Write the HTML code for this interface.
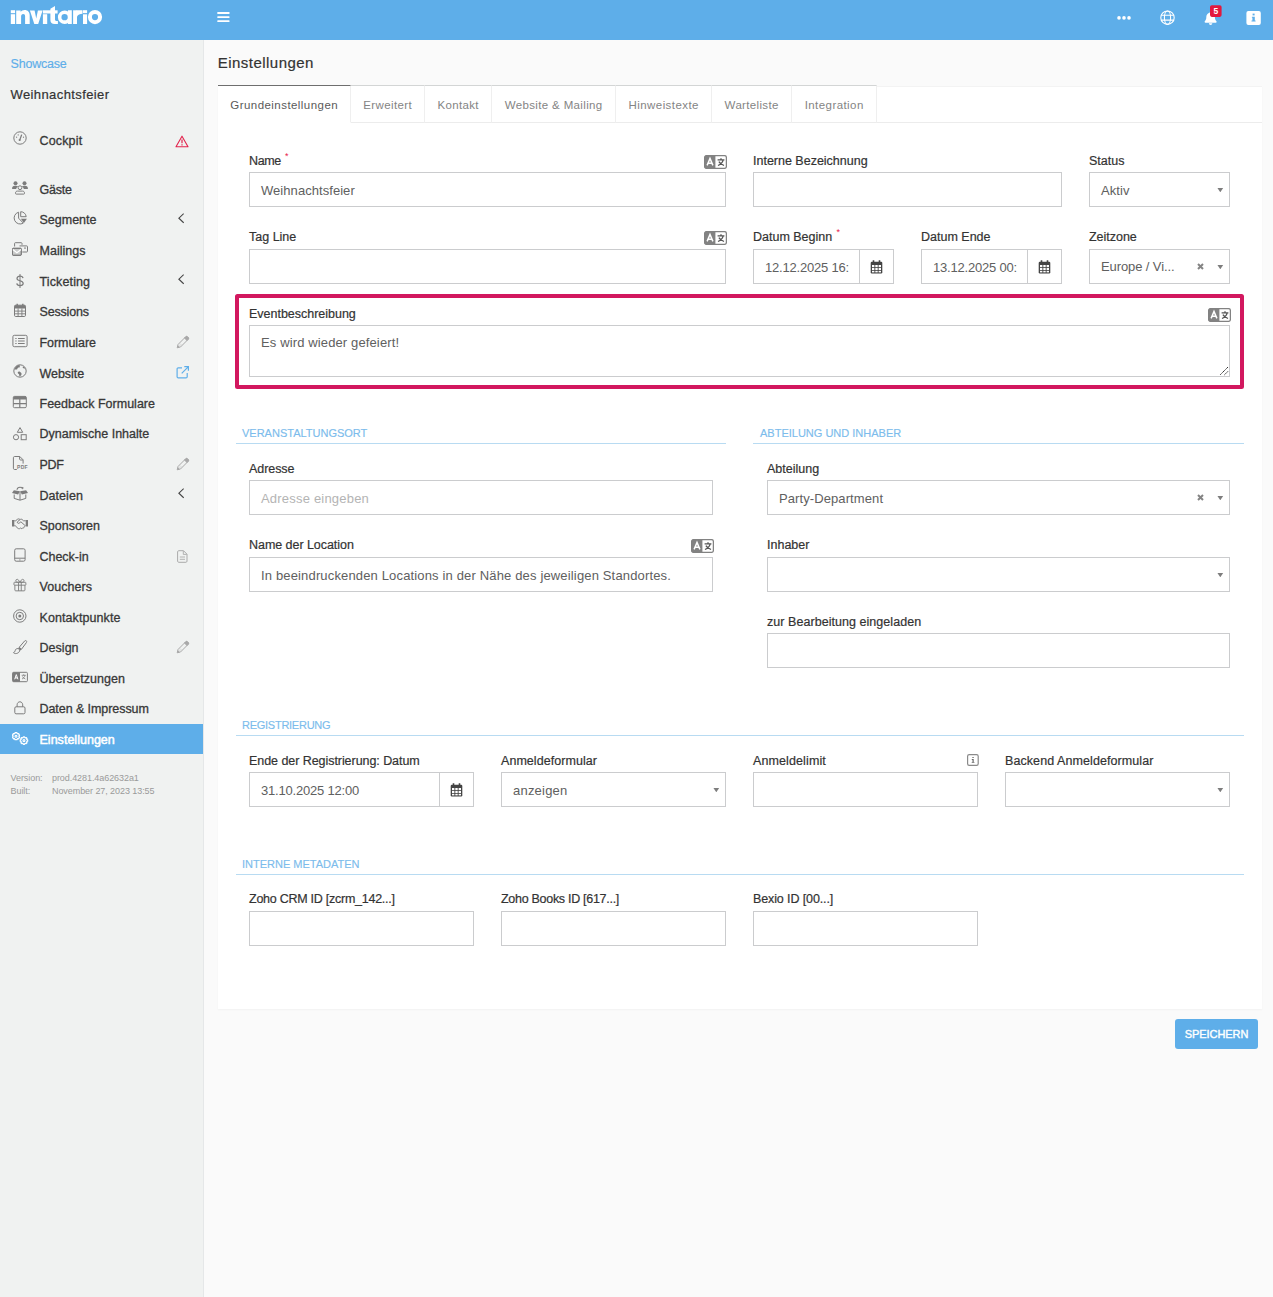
<!DOCTYPE html>
<html lang="de">
<head>
<meta charset="utf-8">
<title>Einstellungen</title>
<style>
*{box-sizing:border-box;margin:0;padding:0}
html,body{width:1273px;height:1297px;overflow:hidden}
body{position:relative;background:#fafafa;font-family:"Liberation Sans",sans-serif;font-size:13px;color:#333}
.a{position:absolute;white-space:nowrap}
#hdr{left:0;top:0;width:1273px;height:40px;background:#5eaee9}
#side{left:0;top:40px;width:203px;height:1257px;background:#f0f2f1}
#sideb{left:203px;top:40px;width:1px;height:1257px;background:#e5e7e8}
/* sidebar */
.mi{left:0;width:203px;height:30.56px}
.mi .t{position:absolute;left:39.500px;top:1px;line-height:30.560px;font-size:12.500px;color:#383838;-webkit-text-stroke:.3px #383838}
.mi svg.i{position:absolute;left:12px;top:6px}
.mi svg.r{position:absolute;right:14px;top:8px}
.mi.on{background:#5eaee9}
.mi.on .t{color:#fff;-webkit-text-stroke:.5px #fff}
/* main */
#panel{left:218px;top:86px;width:1044px;height:923px;background:#fff;border-top:1px solid #f3f3f3;box-shadow:0 1px 2px rgba(0,0,0,.035)}
.tab{top:85px;height:38px;line-height:38px;text-align:center;font-size:11.500px;color:#848484;border-top:1px solid #d3d5d5;border-right:1px solid #efefef;border-bottom:1px solid #ececec;background:#fff}
.tab.on{color:#5a5a5a;border-top:1px solid #6e6e6e;border-bottom:1px solid #fff;border-right:1px solid #efefef}
.lb{font-size:12.500px;line-height:16px;color:#333;-webkit-text-stroke:.2px #333}
.lb i{font-style:normal;color:#e8174b;font-size:9px;position:relative;top:-6px;left:4.300px;-webkit-text-stroke:0}
.in{height:35px;border:1px solid #cbccce;background:#fff;line-height:35.200px;padding-left:11px;font-size:13px;color:#606060;letter-spacing:.17px;overflow:hidden}
.ph{color:#b4b4b4}
.dt{letter-spacing:-.2px}
.dt::after{content:"";position:absolute;right:0;top:0;width:10px;height:33px;background:#fff}
.sec{font-size:11px;line-height:14px;color:#7cbcec;letter-spacing:0;-webkit-text-stroke:.15px #7cbcec}
.ln{height:1px;background:#b8dbf2}
.car{position:absolute;right:5.500px;top:15px;width:6.400px;height:4.400px;background:#7d7d7d;clip-path:polygon(5% 0,95% 0,50% 96%)}
.x{position:absolute;right:25.100px;top:12.600px}
.cal{height:35px;width:34px;border:1px solid #cbccce;border-left:0;background:#fff}
.cal svg{position:absolute;left:10.400px;top:9.800px}
</style>
</head>
<body>
<div class="a" id="hdr"></div>
<div class="a" id="side"></div>
<div class="a" id="sideb"></div>
<div class="a" id="panel"></div>
<!--HDR-->
<svg class="a" style="left:0;top:0" width="1273" height="40" viewBox="0 0 1273 40">
<g fill="#fff">
<!-- logo -->
<rect x="10.800" y="10.200" width="4.300" height="3"/><rect x="10.800" y="14.200" width="4.300" height="9.800"/>
<path d="M16.200 24V10.400h4.500v1.500c.9-1.100 2.200-1.800 3.900-1.800 3.200 0 5.100 2.100 5.100 5.400V24h-4.600v-7.700c0-1.500-.7-2.300-1.900-2.300-1.300 0-2.100.9-2.100 2.400V24z"/>
<path d="M29.900 10.400h4.700l1.650 8 1.650-8h4.700L38.200 24h-3.900z"/>
<rect x="42.900" y="10.300" width="14.700" height="3.200"/><rect x="42.900" y="14.200" width="4.300" height="9.800"/>
<path d="M50.400 8.700L55 6.100v13.500c0 .9.500 1.300 1.300 1.300h1.600V24h-3.200c-2.900 0-4.300-1.400-4.300-4.100z"/>
<path d="M64.600 10.500a6.700 6.700 0 1 0 0 13.400c1.300 0 2.400-.4 3.300-1V24h3.900V10.300h-3.900v1.200c-.9-.6-2-1-3.300-1zm0 3.500a3.150 3.150 0 1 1 0 6.300a3.150 3.150 0 1 1 0-6.300z"/>
<rect x="73.100" y="10.300" width="3.900" height="13.700"/><path d="M76.500 10.200h6v3.600c-2.600 0-4.500.8-5.500 2.900z"/>
<rect x="83" y="10.200" width="4.100" height="2.900"/><rect x="83" y="14.300" width="4.100" height="9.700"/>
<path d="M95 10a7.100 7.100 0 1 0 0 14.200a7.100 7.100 0 1 0 0-14.200zm0 4a3.100 3.100 0 1 1 0 6.200a3.100 3.100 0 1 1 0-6.200z"/>
<!-- hamburger -->
<rect x="217.300" y="12.100" width="12.200" height="1.800" rx=".5"/><rect x="217.300" y="16.200" width="12.200" height="1.800" rx=".5"/><rect x="217.300" y="20.200" width="12.200" height="1.800" rx=".5"/>
<!-- dots -->
<circle cx="1119" cy="17.900" r="1.800"/><circle cx="1124" cy="17.900" r="1.800"/><circle cx="1129" cy="17.900" r="1.800"/>
<!-- bell -->
<path d="M1210.600 11.400c-.5 0-.9.400-.9.900v.5c-2 .4-3.400 2.200-3.400 4.300v.5c0 1.300-.4 2.500-1.300 3.500l-.2.200c-.2.300-.3.600-.1.900.1.300.4.500.8.500h10.300c.3 0 .7-.2.800-.5.100-.3.100-.7-.2-.9l-.2-.2c-.8-1-1.300-2.200-1.300-3.500v-.5c0-2.100-1.500-3.900-3.400-4.300v-.5c0-.5-.4-.9-.9-.9zm1.200 13c.3-.3.500-.8.500-1.200h-3.400c0 .4.200.9.500 1.200.3.300.8.500 1.200.5s.9-.2 1.200-.5z"/>
<!-- info -->
<rect x="1246.400" y="10.900" width="14.400" height="14" rx="2"/>
</g>
<!-- globe -->
<g fill="none" stroke="#fff" stroke-width="1.100">
<circle cx="1167.500" cy="17.700" r="6.700"/>
<ellipse cx="1167.500" cy="17.700" rx="3.100" ry="6.700"/>
<path d="M1161.300 15.300h12.400M1161.300 20.100h12.400"/>
</g>
<!-- badge -->
<rect x="1210" y="5.200" width="11.600" height="11.700" rx="1.800" fill="#e2183d"/>
<text x="1215.900" y="14" font-family="Liberation Sans" font-size="8.500" font-weight="bold" fill="#fff" text-anchor="middle">5</text>
<!-- info i -->
<g fill="#5eaee9"><rect x="1252.600" y="13.600" width="2" height="1.800"/><path d="M1251.900 16.800h2.900v3.800h.8v1h-4.100v-1h.9v-2.800h-.5z"/></g>
</svg>
<!--/HDR-->
<!--SIDE-->
<div class="a" style="left:10.500px;top:56px;line-height:16px;font-size:12.500px;color:#5eaee9;letter-spacing:-.2px;-webkit-text-stroke:.15px #5eaee9">Showcase</div>
<div class="a" style="left:10.500px;top:85.700px;line-height:18px;font-size:13px;color:#333;letter-spacing:.4px;-webkit-text-stroke:.2px #333">Weihnachtsfeier</div>
<div class="a mi" style="top:124.90px"><svg class="i" style="top:5.200px" width="16" height="16" viewBox="0 0 16 16" fill="none" stroke="#7c7c7c" stroke-width="1" ><circle cx="8" cy="8" r="6.2"/><path d="M9.700 4.600L7.900 9.600" stroke-width="1.300"/><circle cx="7.700" cy="10" r="1.100" fill="#7c7c7c" stroke="none"/><circle cx="4.600" cy="7.200" r=".6" fill="#7c7c7c" stroke="none"/><circle cx="6.200" cy="4.900" r=".6" fill="#7c7c7c" stroke="none"/><circle cx="11.500" cy="7.200" r=".6" fill="#7c7c7c" stroke="none"/></svg><span class="t" style="letter-spacing:0.159px">Cockpit</span><svg class="r" style="right:14.200px;top:9.700px" width="14" height="13" viewBox="0 0 14 13" fill="none" stroke="#e2234c" stroke-width="1.100"><path d="M7 1.200l6 10.500H1z" stroke-linejoin="round"/><path d="M7 4.500v3.700M7 9.300v1.200" stroke-width="1.200"/></svg></div>
<div class="a mi" style="top:173.80px"><svg class="i" width="16" height="16" viewBox="0 0 16 16" fill="none" stroke="#7c7c7c" stroke-width="1" ><circle cx="3.500" cy="3.300" r="2" fill="#7c7c7c" stroke="none"/><circle cx="12.500" cy="3.300" r="2" fill="#7c7c7c" stroke="none"/><path d="M0 8.600c0-1.700 1.200-2.900 2.700-2.900h1.400c.8 0 1.500.3 2 .9-1 .5-1.700 1.300-1.900 2.400H.5c-.3 0-.5-.2-.5-.400z" fill="#7c7c7c" stroke="none"/><path d="M16 8.600c0-1.700-1.200-2.900-2.700-2.900h-1.400c-.8 0-1.500.3-2 .9 1 .5 1.700 1.300 1.900 2.400h3.700c.3 0 .5-.2.500-.400z" fill="#7c7c7c" stroke="none"/><circle cx="8" cy="7.700" r="1.900"/><path d="M5.400 11.100h5.200c1.100 0 1.900.800 1.900 1.900v.4c0 .4-.3.700-.7.700H4.200c-.4 0-.7-.3-.7-.7v-.4c0-1.100.8-1.900 1.900-1.900z"/></svg><span class="t" style="letter-spacing:-0.212px">Gäste</span></div>
<div class="a mi" style="top:204.36px"><svg class="i" width="16" height="16" viewBox="0 0 16 16" fill="none" stroke="#7c7c7c" stroke-width="1" ><path d="M6.600 2.200A6 6 0 1 0 11.300 13.100L6.600 8.200z"/><path d="M8.700 1.700v5h5.500a5.500 5.500 0 0 0-5.500-5z"/><path d="M8.900 8.700h6l-3 4.300z" fill="#7c7c7c" stroke="none"/></svg><span class="t" style="letter-spacing:0.002px">Segmente</span><svg class="r" style="right:18.700px;top:8.700px" width="6.500" height="10.500" viewBox="0 0 6.500 10.500" fill="none" stroke="#444" stroke-width="1.150"><path d="M5.700 .6L.9 5.200l4.800 4.600"/></svg></div>
<div class="a mi" style="top:234.92px"><svg class="i" width="16" height="16" viewBox="0 0 16 16" fill="none" stroke="#7c7c7c" stroke-width="1" ><path d="M2.600 5.500V2.400c0-.4.300-.7.700-.7h6c.4 0 .7.300.7.700v1.400"/><path d="M7.500 4.900h7.300c.4 0 .7.300.7.700v4.700c0 .4-.3.700-.7.700h-4.500"/><rect x="12.300" y="6.400" width="1.400" height="1.400" fill="#7c7c7c" stroke="none"/><rect x=".5" y="7.300" width="8.800" height="7" rx=".8" fill="#c9cbca"/><rect x=".5" y="7.300" width="8.800" height="7" rx=".8"/><path d="M.8 8.500l4.100 3.200 4.100-3.200" stroke="#fff" stroke-width="1.200"/></svg><span class="t" style="letter-spacing:0.018px">Mailings</span></div>
<div class="a mi" style="top:265.48px"><svg class="i" style="top:7.500px" width="16" height="16" viewBox="0 0 16 16" fill="none" stroke="#7c7c7c" stroke-width="1" ><path d="M8 1v14" stroke-width="1"/><path d="M11 5.200c-.2-1.300-1.400-2-3-2-1.700 0-3 .8-3 2.200 0 3 6.200 1.600 6.200 4.900 0 1.500-1.400 2.300-3.200 2.300-1.800 0-3-.8-3.200-2.200" stroke-width="1.200"/></svg><span class="t" style="letter-spacing:0.126px;top:2px">Ticketing</span><svg class="r" style="right:18.700px;top:8.700px" width="6.500" height="10.500" viewBox="0 0 6.500 10.500" fill="none" stroke="#444" stroke-width="1.150"><path d="M5.700 .6L.9 5.200l4.800 4.600"/></svg></div>
<div class="a mi" style="top:296.04px"><svg class="i" width="16" height="16" viewBox="0 0 16 16" fill="none" stroke="#7c7c7c" stroke-width="1" ><rect x="2.500" y="3.200" width="11" height="11.300" rx="1.200"/><path d="M2.500 4.400c0-.7.500-1.200 1.200-1.200h8.600c.7 0 1.200.5 1.200 1.200v2h-11z" fill="#7c7c7c" stroke="none"/><path d="M5.200 1.700v2M10.800 1.700v2" stroke-width="1.400"/><path d="M6.100 6.400v8M9.900 6.400v8M2.500 9.100h11M2.500 11.800h11" stroke-width=".9"/></svg><span class="t" style="letter-spacing:-0.179px">Sessions</span></div>
<div class="a mi" style="top:326.60px"><svg class="i" width="16" height="16" viewBox="0 0 16 16" fill="none" stroke="#7c7c7c" stroke-width="1" ><rect x=".9" y="2.300" width="14.200" height="11.400" rx="1.400"/><path d="M6 5.500h6.700M6 8h6.700M6 10.500h6.700" stroke-width="1"/><path d="M3.300 5.500h1.300M3.300 8h1.300M3.300 10.500h1.300" stroke-width="1.100"/></svg><span class="t" style="letter-spacing:-0.063px">Formulare</span><svg class="r" style="right:13.500px" width="14" height="14" viewBox="0 0 14 14" fill="none" stroke="#a9a9a9" stroke-width="1"><path d="M1.200 12.800l.8-3.300L9.700 1.800c.5-.5 1.300-.5 1.800 0l.7.700c.5.500.5 1.300 0 1.800L4.500 12z"/><path d="M1.300 12.700l.6-2.400 1.800 1.800z" fill="#a9a9a9" stroke="none"/><path d="M8.500 3L9.700 1.800c.5-.5 1.300-.5 1.800 0l.7.700c.5.500.5 1.300 0 1.800L11 5.500z" fill="#a9a9a9"/><path d="M3 9.500l1.500 1.500M4 8.500l1.500 1.500" stroke-width=".6" stroke="#c4c4c4"/></svg></div>
<div class="a mi" style="top:357.16px"><svg class="i" width="16" height="16" viewBox="0 0 16 16" fill="none" stroke="#7c7c7c" stroke-width="1" ><circle cx="8" cy="8" r="6.200"/><path d="M2.400 6.500c.8-.3 1.600.2 2.300 0 .8-.3.600-1.200 1.300-1.700.6-.4 1.500 0 1.800-.8.200-.6-.3-1.300-.1-1.900L6 2.200C4 3 2.800 4.600 2.400 6.500zM7 8.400c-.9.100-1.500.9-1.200 1.700.2.700 1 .8 1.300 1.400.3.600 0 1.500.5 2.100.5-.2 1.600-1.300 1.900-2.200.2-.7-.1-1.400-.6-1.900-.6-.5-1.200-1.200-1.900-1.100zM11 3.400c-.5.400-.3 1.100.1 1.500.5.500 1.300.3 1.800.8l.8 1.200c-.2-1.700-1.200-2.900-2.700-3.500z" fill="#7c7c7c" stroke="none"/></svg><span class="t" style="letter-spacing:-0.048px;top:2px">Website</span><svg class="r" style="right:13.500px;top:7.500px" width="14" height="14" viewBox="0 0 14 14" fill="none" stroke="#5eaee9" stroke-width="1.200"><path d="M11.200 8v3.700c0 .7-.5 1.200-1.200 1.200H2.300c-.7 0-1.200-.5-1.200-1.200V4c0-.7.500-1.200 1.200-1.200H6"/><path d="M8.300 1.600h4.100v4.100M12.200 1.800L5.700 8.300"/></svg></div>
<div class="a mi" style="top:387.72px"><svg class="i" width="16" height="16" viewBox="0 0 16 16" fill="none" stroke="#7c7c7c" stroke-width="1" ><rect x="1.300" y="2.400" width="13" height="11.300" rx="1.200"/><path d="M1.300 3.600c0-.7.500-1.200 1.200-1.200h10.600c.7 0 1.200.5 1.200 1.200v2h-13z" fill="#7c7c7c" stroke="none"/><path d="M7.800 5v8.700M1.300 9.600h13" stroke-width="1.200"/></svg><span class="t" style="letter-spacing:0.010px">Feedback Formulare</span></div>
<div class="a mi" style="top:418.28px"><svg class="i" style="top:7.400px" width="16" height="16" viewBox="0 0 16 16" fill="none" stroke="#7c7c7c" stroke-width="1" ><path d="M8 1.600l2.700 4.700H5.300z" stroke-linejoin="round"/><circle cx="4" cy="11.200" r="2.600"/><rect x="9.200" y="8.700" width="5" height="5"/></svg><span class="t" style="letter-spacing:-0.005px">Dynamische Inhalte</span></div>
<div class="a mi" style="top:448.84px"><svg class="i" width="16" height="16" viewBox="0 0 16 16" fill="none" stroke="#7c7c7c" stroke-width="1" ><path d="M4.800 14.500H2.600c-.7 0-1.200-.5-1.200-1.200V2.700c0-.7.500-1.200 1.200-1.200h5.200l3.300 3.300v3.800"/><path d="M7.600 1.700v2.400c0 .5.400.9.900.9h2.400" /><text x="5.100" y="14.300" font-family="Liberation Sans" font-size="5" font-weight="bold" fill="#7c7c7c" stroke="none" letter-spacing=".2">PDF</text></svg><span class="t" style="letter-spacing:-0.333px">PDF</span><svg class="r" style="right:13.500px" width="14" height="14" viewBox="0 0 14 14" fill="none" stroke="#a9a9a9" stroke-width="1"><path d="M1.200 12.800l.8-3.300L9.700 1.800c.5-.5 1.300-.5 1.800 0l.7.700c.5.500.5 1.300 0 1.800L4.500 12z"/><path d="M1.300 12.700l.6-2.400 1.800 1.800z" fill="#a9a9a9" stroke="none"/><path d="M8.500 3L9.700 1.800c.5-.5 1.300-.5 1.800 0l.7.700c.5.500.5 1.300 0 1.800L11 5.500z" fill="#a9a9a9"/><path d="M3 9.500l1.500 1.500M4 8.500l1.500 1.500" stroke-width=".6" stroke="#c4c4c4"/></svg></div>
<div class="a mi" style="top:479.40px"><svg class="i" style="top:7px" width="16" height="16" viewBox="0 0 16 16" fill="none" stroke="#7c7c7c" stroke-width="1" ><path d="M1.900 4.200L8 5.300 6.100 8.500 0 7z" fill="#7c7c7c" stroke="none"/><path d="M14.100 4.200L8 5.300l1.900 3.200L16 7z" fill="#7c7c7c" stroke="none"/><path d="M2.200 8.500v3.900L8 14.200l5.800-1.800V8.500"/><path d="M8 6v8" stroke-width="1"/><path d="M5 3.800c.2-1.500 1.500-2.500 3-2.500 1 0 1.800.4 2.400 1.100" stroke-width="1.100"/><path d="M9.700.8l2.100.9-1.300 1.700z" fill="#7c7c7c" stroke="none"/></svg><span class="t" style="letter-spacing:0.044px;top:2px">Dateien</span><svg class="r" style="right:18.700px;top:8.700px" width="6.500" height="10.500" viewBox="0 0 6.500 10.500" fill="none" stroke="#444" stroke-width="1.150"><path d="M5.700 .6L.9 5.200l4.800 4.600"/></svg></div>
<div class="a mi" style="top:509.96px"><svg class="i" width="16" height="16" viewBox="0 0 16 16" fill="none" stroke="#7c7c7c" stroke-width="1" ><path d="M0 4h2.300v6.500H0z" fill="#7c7c7c" stroke="none"/><path d="M16 4h-2.300v6.500H16z" fill="#7c7c7c" stroke="none"/><path d="M2.300 4.800h1.300l2-1.600c.5-.4 1.200-.4 1.700-.1L8 3.500"/><path d="M13.700 4.800h-2.200l-1.400-1.300c-.5-.4-1.200-.5-1.700-.1L5.700 5.500c-.5.400-.5 1.100-.1 1.500.4.500 1.100.5 1.600.1l1.700-1.300 4 3.600c.3.300.6.300.8.300"/><path d="M2.300 9.700h.9l2.700 2.600c.7.600 1.700.6 2.300 0l.3-.3.500.4c.5.400 1.200.3 1.600-.2l.3-.4c.5.200 1 0 1.300-.4.300-.400.300-.9 0-1.300"/></svg><span class="t" style="letter-spacing:0.003px">Sponsoren</span></div>
<div class="a mi" style="top:540.52px"><svg class="i" width="16" height="16" viewBox="0 0 16 16" fill="none" stroke="#7c7c7c" stroke-width="1" ><rect x="2.700" y="1.800" width="10.400" height="12.400" rx="1.500"/><path d="M2.700 11.200h10.400"/><circle cx="7.900" cy="12.900" r=".6" fill="#7c7c7c" stroke="none"/></svg><span class="t" style="letter-spacing:-0.029px">Check-in</span><svg class="r" style="right:15px;top:9px" width="11" height="13" viewBox="0 0 11 13" fill="none" stroke="#aaa" stroke-width="1"><path d="M1.700.7h4.800l3.500 3.500v7c0 .6-.5 1.100-1.100 1.100H1.700c-.6 0-1.100-.5-1.100-1.100V1.800C.6 1.200 1.100.7 1.700.7z"/><path d="M6.300.9v3.500h3.500M2.800 7h5.200M2.800 9.300h5.200" stroke-width=".9"/></svg></div>
<div class="a mi" style="top:571.08px"><svg class="i" width="16" height="16" viewBox="0 0 16 16" fill="none" stroke="#7c7c7c" stroke-width="1" ><g transform="translate(.8 .8) scale(.9)"><rect x="1.300" y="5" width="13.200" height="3.200" rx=".6"/><path d="M2.300 8.200v5.400c0 .5.400.9.900.9h9.400c.5 0 .9-.4.900-.9V8.200"/><path d="M6.400 5v9.500M9.400 5v9.500"/><path d="M7.600 4.800C7 3.200 6 1.700 4.900 1.700c-1 0-1.600.7-1.600 1.600 0 .9.700 1.600 1.700 1.600zM8.200 4.800c.6-1.600 1.600-3.100 2.700-3.100 1 0 1.600.7 1.600 1.600 0 .9-.7 1.600-1.700 1.600z"/></g></svg><span class="t" style="letter-spacing:0.047px">Vouchers</span></div>
<div class="a mi" style="top:601.64px"><svg class="i" width="16" height="16" viewBox="0 0 16 16" fill="none" stroke="#7c7c7c" stroke-width="1" ><circle cx="7.800" cy="8" r="6.200"/><circle cx="7.800" cy="8" r="3.700"/><circle cx="7.800" cy="8" r="1.500" fill="#7c7c7c" stroke="none"/></svg><span class="t" style="letter-spacing:0.083px">Kontaktpunkte</span></div>
<div class="a mi" style="top:632.20px"><svg class="i" style="top:7.300px" width="16" height="16" viewBox="0 0 16 16" fill="none" stroke="#7c7c7c" stroke-width="1" ><path d="M14.200 1.700c.6.500.6 1.300.2 1.900L9.500 10.200 7.200 8.300l5.400-6.300c.4-.5 1.100-.6 1.600-.3z"/><path d="M7.100 8.300l2.400 1.900-.9 1.300-2.500-2z" fill="#7c7c7c" stroke="none"/><path d="M6.200 9.600c-1.500-.3-2.800.6-3 2-.1.900-.5 1.500-1.400 1.700-.3.100-.4.500-.1.700 1 .7 2.400.7 3.500.3 1.700-.6 2.700-2 2.500-3.500z"/></svg><span class="t" style="letter-spacing:0.030px">Design</span><svg class="r" style="right:13.500px" width="14" height="14" viewBox="0 0 14 14" fill="none" stroke="#a9a9a9" stroke-width="1"><path d="M1.200 12.800l.8-3.300L9.700 1.800c.5-.5 1.300-.5 1.800 0l.7.700c.5.500.5 1.300 0 1.800L4.500 12z"/><path d="M1.300 12.700l.6-2.400 1.800 1.800z" fill="#a9a9a9" stroke="none"/><path d="M8.500 3L9.700 1.800c.5-.5 1.300-.5 1.800 0l.7.700c.5.500.5 1.300 0 1.800L11 5.500z" fill="#a9a9a9"/><path d="M3 9.500l1.500 1.500M4 8.500l1.500 1.500" stroke-width=".6" stroke="#c4c4c4"/></svg></div>
<div class="a mi" style="top:662.76px"><svg class="i" width="16" height="16" viewBox="0 0 16 16" fill="none" stroke="#7c7c7c" stroke-width="1" ><rect x=".6" y="3.300" width="14.800" height="9.400" rx="1"/><path d="M.6 4.300c0-.6.400-1 1-1H8v9.400H1.600c-.6 0-1-.4-1-1z" fill="#7c7c7c" stroke="none"/><path d="M2.700 10.300L4.300 5.600l1.600 4.700M3.200 8.900h2.200" stroke="#fff" stroke-width="1"/><path d="M9.700 6.300h4M11.700 5.300v1M13 6.300c-.3 1.700-1.400 3-3 3.700M10.500 7.500c.5 1.100 1.500 2 2.800 2.500" stroke-width=".8"/></svg><span class="t" style="letter-spacing:0.063px">Übersetzungen</span></div>
<div class="a mi" style="top:693.32px"><svg class="i" width="16" height="16" viewBox="0 0 16 16" fill="none" stroke="#7c7c7c" stroke-width="1" ><rect x="2.800" y="7.800" width="10.200" height="7" rx="1.300"/><path d="M5.100 7.800V5.800c0-1.700 1.300-3 2.800-3 1.500 0 2.800 1.300 2.800 3v2"/></svg><span class="t" style="letter-spacing:-0.069px">Daten &amp; Impressum</span></div>
<div class="a mi on" style="top:723.88px"><svg class="i" width="17" height="16" viewBox="0 0 17 16" fill="none" stroke="#fff" stroke-width="1"><path d="M3.06 2.67L4.94 2.67L5.22 3.47L5.76 3.78L6.59 3.62L7.52 5.25L6.98 5.89L6.98 6.51L7.52 7.15L6.59 8.78L5.76 8.62L5.22 8.93L4.94 9.73L3.06 9.73L2.78 8.93L2.24 8.62L1.41 8.78L0.48 7.15L1.02 6.51L1.02 5.89L0.48 5.25L1.41 3.62L2.24 3.78L2.78 3.47z" stroke-linejoin="round" stroke-width="1.250"/><circle cx="4" cy="6.2" r="1" stroke-width="1.100"/><path d="M11.32 6.90L12.58 6.90L12.80 7.64L13.44 7.91L14.11 7.54L15.01 8.44L14.64 9.11L14.91 9.75L15.65 9.97L15.65 11.23L14.91 11.45L14.64 12.09L15.01 12.76L14.11 13.66L13.44 13.29L12.80 13.56L12.58 14.30L11.32 14.30L11.10 13.56L10.46 13.29L9.79 13.66L8.89 12.76L9.26 12.09L8.99 11.45L8.25 11.23L8.25 9.97L8.99 9.75L9.26 9.11L8.89 8.44L9.79 7.54L10.46 7.91L11.10 7.64z" stroke-linejoin="round" stroke-width="1.250"/><circle cx="11.95" cy="10.6" r="1" stroke-width="1.100"/></svg><span class="t" style="letter-spacing:0.018px">Einstellungen</span></div>
<div class="a" style="left:10.500px;top:772px;font-size:9px;line-height:12px;color:#9a9a9a;letter-spacing:-.06px">Version:</div>
<div class="a" style="left:52px;top:772px;font-size:9px;line-height:12px;color:#9a9a9a;letter-spacing:-.07px">prod.4281.4a62632a1</div>
<div class="a" style="left:10.500px;top:785px;font-size:9px;line-height:12px;color:#9a9a9a;letter-spacing:-.06px">Built:</div>
<div class="a" style="left:52px;top:785px;font-size:9px;line-height:12px;color:#9a9a9a;letter-spacing:-.07px">November 27, 2023 13:55</div>
<!--/SIDE-->
<!--MAIN-->
<div class="a" style="left:217.800px;top:52.700px;font-size:15px;line-height:20px;color:#333;letter-spacing:.46px;-webkit-text-stroke:.2px #333">Einstellungen</div>
<div class="a" style="left:218px;top:122px;width:1044px;height:1px;background:#ececec"></div>
<div class="a tab on" style="left:218px;width:133px;letter-spacing:0.442px"><span style="margin-right:-0.442px">Grundeinstellungen</span></div>
<div class="a tab" style="left:351px;width:74px;letter-spacing:0.381px"><span style="margin-right:-0.381px">Erweitert</span></div>
<div class="a tab" style="left:425px;width:67px;letter-spacing:0.329px"><span style="margin-right:-0.329px">Kontakt</span></div>
<div class="a tab" style="left:492px;width:124px;letter-spacing:0.357px"><span style="margin-right:-0.357px">Website &amp; Mailing</span></div>
<div class="a tab" style="left:616px;width:96px;letter-spacing:0.433px"><span style="margin-right:-0.433px">Hinweistexte</span></div>
<div class="a tab" style="left:712px;width:80px;letter-spacing:0.340px"><span style="margin-right:-0.340px">Warteliste</span></div>
<div class="a tab" style="left:792px;width:85px;letter-spacing:0.431px"><span style="margin-right:-0.431px">Integration</span></div>
<div class="a lb" style="left:249px;top:153.00px;letter-spacing:-0.386px">Name<i>*</i></div>
<svg class="a" style="left:704px;top:155px" width="23" height="14" viewBox="0 0 23 14"><rect x=".6" y=".6" width="21.800" height="12.800" rx="2" fill="#fff" stroke="#828282" stroke-width="1.300"/><path d="M.6 2.400c0-1 .8-1.800 1.800-1.800H11.400v12.800H2.400c-1 0-1.800-.8-1.800-1.800z" fill="#828282"/><path d="M3.100 10.400L6 3.500l2.900 6.900M4.200 8.300h3.600" fill="none" stroke="#fff" stroke-width="1.500"/><path d="M13.600 4.800h6.800M17 3.200v1.600M19.200 4.800c-.6 2.400-2.300 4.400-5.200 5.700M14.900 6.600c.9 1.600 2.600 3 5.100 3.900" fill="none" stroke="#555" stroke-width="1.300"/></svg>
<div class="a in " style="left:249px;top:172px;width:477px;height:35px;letter-spacing:0.054px;">Weihnachtsfeier</div>
<div class="a lb" style="left:753px;top:153.00px;letter-spacing:-0.004px">Interne Bezeichnung</div>
<div class="a in " style="left:753px;top:172px;width:309px;height:35px;letter-spacing:0px;"></div>
<div class="a lb" style="left:1089px;top:153.00px;letter-spacing:0px">Status</div>
<div class="a in " style="left:1089px;top:172px;width:141px;height:35px;letter-spacing:0.086px;">Aktiv<span class="car"></span></div>
<div class="a lb" style="left:249px;top:229.00px;letter-spacing:0px">Tag Line</div>
<svg class="a" style="left:704px;top:231px" width="23" height="14" viewBox="0 0 23 14"><rect x=".6" y=".6" width="21.800" height="12.800" rx="2" fill="#fff" stroke="#828282" stroke-width="1.300"/><path d="M.6 2.400c0-1 .8-1.800 1.800-1.800H11.400v12.800H2.400c-1 0-1.800-.8-1.800-1.800z" fill="#828282"/><path d="M3.100 10.400L6 3.500l2.900 6.900M4.200 8.300h3.600" fill="none" stroke="#fff" stroke-width="1.500"/><path d="M13.600 4.800h6.800M17 3.200v1.600M19.200 4.800c-.6 2.400-2.300 4.400-5.200 5.700M14.900 6.600c.9 1.600 2.600 3 5.100 3.900" fill="none" stroke="#555" stroke-width="1.300"/></svg>
<div class="a in " style="left:249px;top:249px;width:477px;height:35px;letter-spacing:0px;"></div>
<div class="a lb" style="left:753px;top:229.00px;letter-spacing:-0.002px">Datum Beginn<i>*</i></div>
<div class="a in dt" style="left:753px;top:249px;width:107px;height:35px;letter-spacing:.12px;letter-spacing:-.2px">12.12.2025 16:00</div>
<div class="a cal" style="left:860px;top:249px"><svg width="13" height="14" viewBox="0 0 13 14"><rect x=".7" y="1.800" width="11.600" height="11.600" rx="1.200" fill="#444"/><path d="M3.500 0.300v2.500M9.500 0.300v2.500" stroke="#444" stroke-width="1.600"/><g fill="#fff"><rect x="2" y="5" width="2.400" height="2.100"/><rect x="5.300" y="5" width="2.400" height="2.100"/><rect x="8.600" y="5" width="2.400" height="2.100"/><rect x="2" y="7.900" width="2.400" height="2.100"/><rect x="5.300" y="7.900" width="2.400" height="2.100"/><rect x="8.600" y="7.900" width="2.400" height="2.100"/><rect x="2" y="10.800" width="2.400" height="1.600"/><rect x="5.300" y="10.800" width="2.400" height="1.600"/><rect x="8.600" y="10.800" width="2.400" height="1.600"/></g></svg></div>
<div class="a lb" style="left:921px;top:229.00px;letter-spacing:0px">Datum Ende</div>
<div class="a in dt" style="left:921px;top:249px;width:107px;height:35px;letter-spacing:.12px;letter-spacing:-.2px">13.12.2025 00:00</div>
<div class="a cal" style="left:1028px;top:249px"><svg width="13" height="14" viewBox="0 0 13 14"><rect x=".7" y="1.800" width="11.600" height="11.600" rx="1.200" fill="#444"/><path d="M3.500 0.300v2.500M9.500 0.300v2.500" stroke="#444" stroke-width="1.600"/><g fill="#fff"><rect x="2" y="5" width="2.400" height="2.100"/><rect x="5.300" y="5" width="2.400" height="2.100"/><rect x="8.600" y="5" width="2.400" height="2.100"/><rect x="2" y="7.900" width="2.400" height="2.100"/><rect x="5.300" y="7.900" width="2.400" height="2.100"/><rect x="8.600" y="7.900" width="2.400" height="2.100"/><rect x="2" y="10.800" width="2.400" height="1.600"/><rect x="5.300" y="10.800" width="2.400" height="1.600"/><rect x="8.600" y="10.800" width="2.400" height="1.600"/></g></svg></div>
<div class="a lb" style="left:1089px;top:229.00px;letter-spacing:-0.019px">Zeitzone</div>
<div class="a in " style="left:1089px;top:249px;width:141px;height:35px;letter-spacing:-0.102px;line-height:33.400px">Europe / Vi...<span class="car"></span><svg class="x" width="7" height="7" viewBox="0 0 7 7"><path d="M1 1l5 5M6 1L1 6" stroke="#848484" stroke-width="2" fill="none"/></svg></div>
<div class="a" style="left:235px;top:294px;width:1009px;height:95px;border:4px solid #d2185f;border-radius:2.500px"></div>
<div class="a lb" style="left:249px;top:306.00px;letter-spacing:-0.014px">Eventbeschreibung</div>
<svg class="a" style="left:1208px;top:308px" width="23" height="14" viewBox="0 0 23 14"><rect x=".6" y=".6" width="21.800" height="12.800" rx="2" fill="#fff" stroke="#828282" stroke-width="1.300"/><path d="M.6 2.400c0-1 .8-1.800 1.800-1.800H11.400v12.800H2.400c-1 0-1.800-.8-1.800-1.800z" fill="#828282"/><path d="M3.100 10.400L6 3.500l2.900 6.900M4.200 8.300h3.600" fill="none" stroke="#fff" stroke-width="1.500"/><path d="M13.600 4.800h6.800M17 3.200v1.600M19.200 4.800c-.6 2.400-2.300 4.400-5.200 5.700M14.900 6.600c.9 1.600 2.600 3 5.100 3.900" fill="none" stroke="#555" stroke-width="1.300"/></svg>
<div class="a in" style="left:249px;top:325px;width:981px;height:52px;line-height:16px;padding-top:8.500px;letter-spacing:.128px">Es wird wieder gefeiert!</div>
<svg class="a" style="left:1219px;top:366px" width="10" height="10" viewBox="0 0 10 10" stroke="#333" stroke-width="1" fill="none"><path d="M9 1L1.100 8.900M9 5.300L5.400 8.900" stroke-dasharray="1.500 .4"/></svg>
<div class="a sec" style="left:242px;top:425.9px;letter-spacing:0px">VERANSTALTUNGSORT</div>
<div class="a ln" style="left:236px;top:443px;width:490px"></div>
<div class="a sec" style="left:760px;top:425.9px;letter-spacing:0px">ABTEILUNG UND INHABER</div>
<div class="a ln" style="left:753px;top:443px;width:491px"></div>
<div class="a lb" style="left:249px;top:461.00px;letter-spacing:-0.066px">Adresse</div>
<div class="a in ph" style="left:249px;top:480px;width:464px;height:35px;letter-spacing:0.199px;">Adresse eingeben</div>
<div class="a lb" style="left:249px;top:537.00px;letter-spacing:-0.049px">Name der Location</div>
<svg class="a" style="left:691px;top:539px" width="23" height="14" viewBox="0 0 23 14"><rect x=".6" y=".6" width="21.800" height="12.800" rx="2" fill="#fff" stroke="#828282" stroke-width="1.300"/><path d="M.6 2.400c0-1 .8-1.800 1.800-1.800H11.400v12.800H2.400c-1 0-1.800-.8-1.800-1.800z" fill="#828282"/><path d="M3.100 10.400L6 3.500l2.900 6.900M4.200 8.300h3.600" fill="none" stroke="#fff" stroke-width="1.500"/><path d="M13.600 4.800h6.800M17 3.200v1.600M19.200 4.800c-.6 2.400-2.300 4.400-5.200 5.700M14.900 6.600c.9 1.600 2.600 3 5.100 3.900" fill="none" stroke="#555" stroke-width="1.300"/></svg>
<div class="a in " style="left:249px;top:557px;width:464px;height:35px;letter-spacing:0.154px;">In beeindruckenden Locations in der Nähe des jeweiligen Standortes.</div>
<div class="a lb" style="left:767px;top:461.00px;letter-spacing:0px">Abteilung</div>
<div class="a in " style="left:767px;top:480px;width:463px;height:35px;letter-spacing:0.094px;">Party-Department<span class="car"></span><svg class="x" width="7" height="7" viewBox="0 0 7 7"><path d="M1 1l5 5M6 1L1 6" stroke="#848484" stroke-width="2" fill="none"/></svg></div>
<div class="a lb" style="left:767px;top:537.00px;letter-spacing:0px">Inhaber</div>
<div class="a in " style="left:767px;top:557px;width:463px;height:35px;letter-spacing:0px;"><span class="car"></span></div>
<div class="a lb" style="left:767px;top:614.00px;letter-spacing:0.050px">zur Bearbeitung eingeladen</div>
<div class="a in " style="left:767px;top:633px;width:463px;height:35px;letter-spacing:0px;"></div>
<div class="a sec" style="left:242px;top:717.5px;letter-spacing:-0.26px">REGISTRIERUNG</div>
<div class="a ln" style="left:236px;top:735px;width:1008px"></div>
<div class="a lb" style="left:249px;top:753.00px;letter-spacing:-0.056px">Ende der Registrierung: Datum</div>
<div class="a in dt" style="left:249px;top:772px;width:191px;height:35px;letter-spacing:.12px;letter-spacing:-.2px">31.10.2025 12:00</div>
<div class="a cal" style="left:440px;top:772px"><svg width="13" height="14" viewBox="0 0 13 14"><rect x=".7" y="1.800" width="11.600" height="11.600" rx="1.200" fill="#444"/><path d="M3.500 0.300v2.500M9.500 0.300v2.500" stroke="#444" stroke-width="1.600"/><g fill="#fff"><rect x="2" y="5" width="2.400" height="2.100"/><rect x="5.300" y="5" width="2.400" height="2.100"/><rect x="8.600" y="5" width="2.400" height="2.100"/><rect x="2" y="7.900" width="2.400" height="2.100"/><rect x="5.300" y="7.900" width="2.400" height="2.100"/><rect x="8.600" y="7.900" width="2.400" height="2.100"/><rect x="2" y="10.800" width="2.400" height="1.600"/><rect x="5.300" y="10.800" width="2.400" height="1.600"/><rect x="8.600" y="10.800" width="2.400" height="1.600"/></g></svg></div>
<div class="a lb" style="left:501px;top:753.00px;letter-spacing:0.054px">Anmeldeformular</div>
<div class="a in " style="left:501px;top:772px;width:225px;height:35px;letter-spacing:0.215px;">anzeigen<span class="car"></span></div>
<div class="a lb" style="left:753px;top:753.00px;letter-spacing:0.111px">Anmeldelimit</div>
<div class="a in " style="left:753px;top:772px;width:225px;height:35px;letter-spacing:0px;"></div>
<svg class="a" style="left:966.500px;top:754.100px" width="12" height="12" viewBox="0 0 12 12"><rect x=".6" y=".6" width="10.600" height="10.800" rx="1.600" fill="#fff" stroke="#8a8a8a" stroke-width="1.200"/><path d="M5.400 3h1.300v1.100H5.400zM4.800 5h1.900v2.900h.7v.9H4.700v-.9h.8v-2h-.7z" fill="#666"/></svg>
<div class="a lb" style="left:1005px;top:753.00px;letter-spacing:0.082px">Backend Anmeldeformular</div>
<div class="a in " style="left:1005px;top:772px;width:225px;height:35px;letter-spacing:0px;"><span class="car"></span></div>
<div class="a sec" style="left:242px;top:856.9px;letter-spacing:0px">INTERNE METADATEN</div>
<div class="a ln" style="left:236px;top:874px;width:1008px"></div>
<div class="a lb" style="left:249px;top:891.00px;letter-spacing:-0.257px">Zoho CRM ID [zcrm_142...]</div>
<div class="a in " style="left:249px;top:911px;width:225px;height:35px;letter-spacing:0px;"></div>
<div class="a lb" style="left:501px;top:891.00px;letter-spacing:-0.290px">Zoho Books ID [617...]</div>
<div class="a in " style="left:501px;top:911px;width:225px;height:35px;letter-spacing:0px;"></div>
<div class="a lb" style="left:753px;top:891.00px;letter-spacing:-0.112px">Bexio ID [00...]</div>
<div class="a in " style="left:753px;top:911px;width:225px;height:35px;letter-spacing:0px;"></div>
<div class="a" style="left:1175px;top:1019px;width:83px;height:30px;background:#5eaee9;border-radius:3px;color:#fff;font-size:11px;line-height:30px;text-align:center;letter-spacing:-.05px;-webkit-text-stroke:.4px #fff">SPEICHERN</div>
<!--/MAIN-->
</body>
</html>
